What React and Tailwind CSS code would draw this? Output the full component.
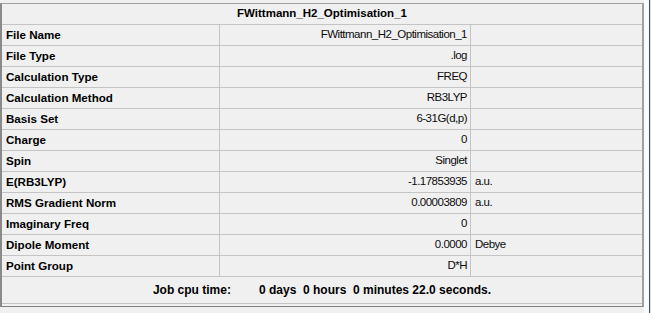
import React from "react";

const rows = [
  { label: "File Name", value: "FWittmann_H2_Optimisation_1", unit: "" },
  { label: "File Type", value: ".log", unit: "" },
  { label: "Calculation Type", value: "FREQ", unit: "" },
  { label: "Calculation Method", value: "RB3LYP", unit: "" },
  { label: "Basis Set", value: "6-31G(d,p)", unit: "" },
  { label: "Charge", value: "0", unit: "" },
  { label: "Spin", value: "Singlet", unit: "" },
  { label: "E(RB3LYP)", value: "-1.17853935", unit: "a.u." },
  { label: "RMS Gradient Norm", value: "0.00003809", unit: "a.u." },
  { label: "Imaginary Freq", value: "0", unit: "" },
  { label: "Dipole Moment", value: "0.0000", unit: "Debye" },
  { label: "Point Group", value: "D*H", unit: "" },
];

function Row({ label, value, unit }) {
  return (
    <div className="flex h-[21px] shrink-0 border-b border-[#c4c4c4]">
      <div className="flex w-[218px] items-center border-r border-[#c4c4c4] pl-[4px] text-[11.6px] font-bold text-black">
        {label}
      </div>
      <div className="flex w-[251px] items-center justify-end border-r border-[#c4c4c4] pr-[3px] text-[11.5px] tracking-[-0.5px] text-[#0c0c0c]">
        {value}
      </div>
      <div className="flex flex-1 items-center pl-[4px] text-[11.5px] tracking-[-0.5px] text-[#0c0c0c]">
        {unit}
      </div>
    </div>
  );
}

export default function App() {
  return (
    <div className="flex h-[313px] w-[651px] bg-[#f0f0f0] font-['Liberation_Sans',Arial,sans-serif]">
      <div className="w-[644px] pt-[3px]">
        <div className="flex h-[304px] flex-col border-b border-l-2 border-r-2 border-t border-b-[#808080] border-l-[#8a8a8a] border-r-[#a0a0a0] border-t-[#a0a0a0]">
          <div className="flex h-[21px] shrink-0 items-center justify-center border-b border-[#c4c4c4] text-[11.5px] font-bold text-black">
            FWittmann_H2_Optimisation_1
          </div>
          {rows.map((r) => (
            <Row key={r.label} {...r} />
          ))}
          <div className="flex h-[27px] shrink-0 items-center justify-center gap-[28px] border-b border-[#c4c4c4] text-[12px] font-bold text-black">
            <span>Job cpu time:</span>
            <span className="whitespace-pre">0 days  0 hours  0 minutes 22.0 seconds.</span>
          </div>
        </div>
      </div>
      <div className="w-[5px] bg-[#fbfbfb]" />
      <div className="w-[1px] bg-[#3d4b6d]" />
      <div className="w-[1px] bg-[#d9dde6]" />
    </div>
  );
}
